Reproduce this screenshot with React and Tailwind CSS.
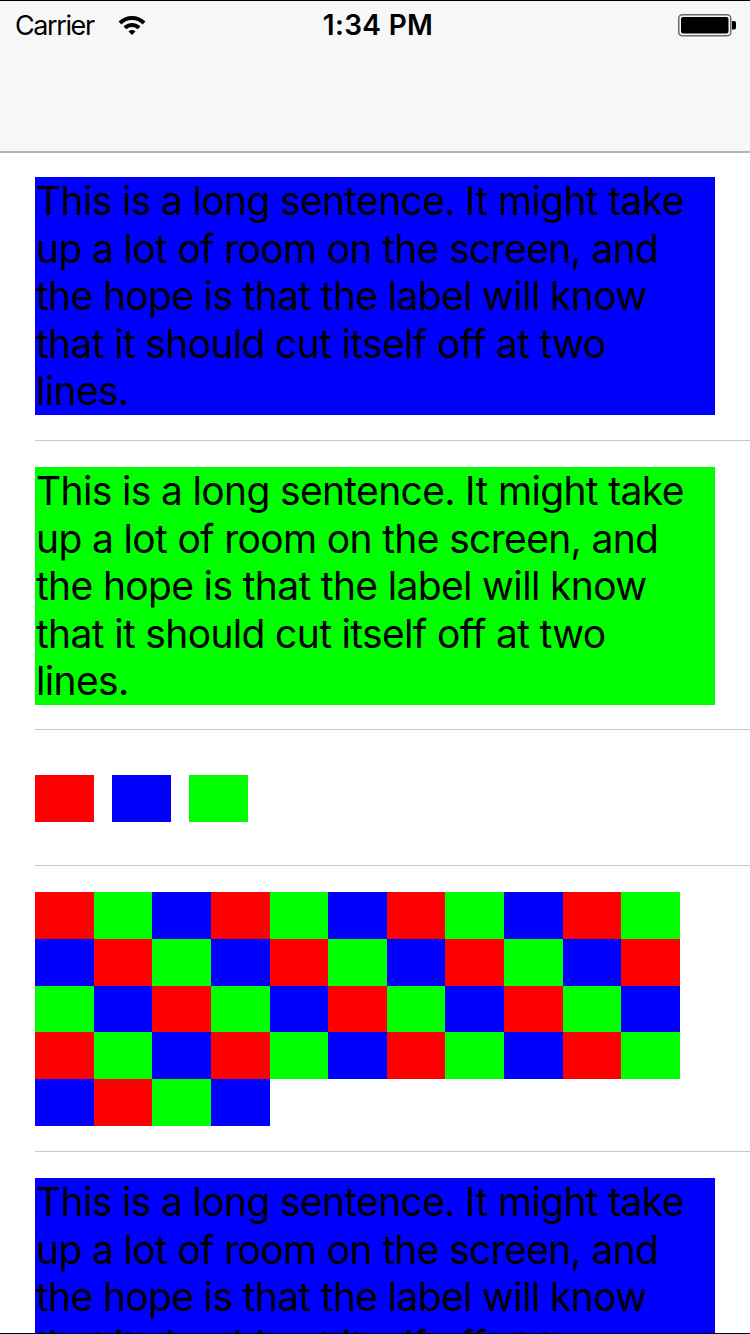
import React from "react";

const LINES = [
  "This is a long sentence. It might take",
  "up a lot of room on the screen, and",
  "the hope is that the label will know",
  "that it should cut itself off at two",
  "lines.",
];

function TextBox({ color }) {
  return (
    <div
      className={`h-[238px] w-[680px] overflow-hidden whitespace-nowrap text-[39px] leading-[47.6px] text-black ${color}`}
      style={{ fontFamily: "Inter, 'Noto Sans', sans-serif" }}
    >
      {LINES.map((l, i) => (
        <div key={i} className="pl-[1px] tracking-[-0.66px]">{l}</div>
      ))}
    </div>
  );
}

function Wifi() {
  return (
    <svg width="28" height="20" viewBox="0 0 28 20" className="block">
      <path d="M0.565 6.565 A19 19 0 0 1 27.435 6.565 L24.607 9.393 A15 15 0 0 0 3.393 9.393 Z" fill="#000" />
      <path d="M5.515 11.515 A12 12 0 0 1 22.485 11.515 L19.657 14.343 A8 8 0 0 0 8.343 14.343 Z" fill="#000" />
      <path d="M14 20 L10.464 16.464 A5 5 0 0 1 17.536 16.464 Z" fill="#000" />
    </svg>
  );
}

function Battery() {
  return (
    <svg width="59" height="23" viewBox="0 0 59 23" className="block">
      <rect x="0.75" y="0.75" width="52" height="21" rx="3.5" fill="none" stroke="#6b6b6b" strokeWidth="1.5" />
      <rect x="3" y="3" width="47.5" height="16.5" rx="2" fill="#000" />
      <path d="M54 7 h2 a2 2 0 0 1 2 2 v4.5 a2 2 0 0 1 -2 2 h-2 Z" fill="#000" />
    </svg>
  );
}

const CELL_COLORS = ["bg-[#ff0000]", "bg-[#00ff00]", "bg-[#0000ff]"];

export default function App() {
  const cells = Array.from({ length: 48 }, (_, i) => CELL_COLORS[i % 3]);
  return (
    <div
      className="h-[1334px] w-[750px] overflow-hidden border-y border-black bg-white"
      style={{ fontFamily: "Inter, 'Noto Sans', sans-serif" }}
    >
      {/* Status + nav bar */}
      <div className="h-[152px] border-b-2 border-[#b3b3b3] bg-[#f7f7f7]">
        <div className="relative flex h-[48px] items-center px-[15px]">
          <div className="flex items-center gap-[24px]">
            <span className="text-[27px] leading-none tracking-[-1.4px] text-black">Carrier</span>
            <Wifi />
          </div>
          <div className="absolute left-0 right-0 top-0 flex h-[48px] items-center justify-center pl-[6px]">
            <span className="text-[28px] font-semibold leading-none tracking-[0.3px] text-black">1:34 PM</span>
          </div>
          <div className="ml-auto mr-[-2px]">
            <Battery />
          </div>
        </div>
      </div>

      {/* Cell 1 */}
      <div className="ml-[35px] border-b border-[#c8c7cc] pb-[25px] pt-[24px]">
        <TextBox color="bg-[#0000ff]" />
      </div>

      {/* Cell 2 */}
      <div className="ml-[35px] border-b border-[#c8c7cc] pb-[24px] pt-[26px]">
        <TextBox color="bg-[#00ff00]" />
      </div>

      {/* Cell 3 */}
      <div className="ml-[35px] border-b border-[#c8c7cc] pb-[43px] pt-[45px]">
        <div className="flex h-[47px] gap-[18.5px]">
          <div className="w-[58.6px] bg-[#ff0000]" />
          <div className="w-[58.6px] bg-[#0000ff]" />
          <div className="w-[58.6px] bg-[#00ff00]" />
        </div>
      </div>

      {/* Cell 4 */}
      <div className="ml-[35px] border-b border-[#c8c7cc] pb-[25px] pt-[26px]">
        <div className="grid h-[234px] grid-cols-[repeat(11,58.64px)] grid-rows-[repeat(5,46.8px)]">
          {cells.map((c, i) => (
            <div key={i} className={c} />
          ))}
        </div>
      </div>

      {/* Cell 5 */}
      <div className="ml-[35px] pt-[26px]">
        <TextBox color="bg-[#0000ff]" />
      </div>
    </div>
  );
}
